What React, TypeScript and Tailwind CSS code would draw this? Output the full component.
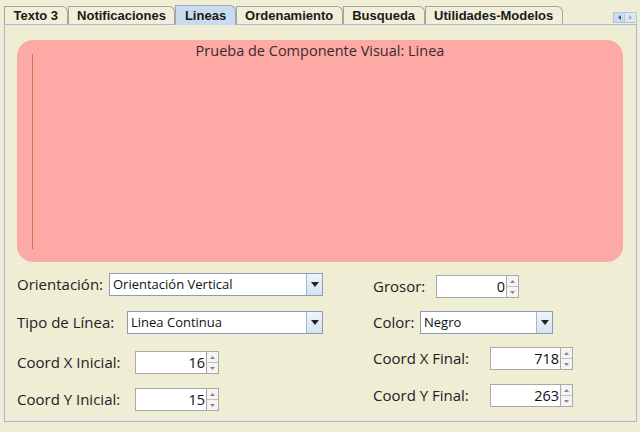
import React from "react";

const font = { fontFamily: '"Open Sans", "Noto Sans", sans-serif' };

const tabs = ["Texto 3", "Notificaciones", "Lineas", "Ordenamiento", "Busqueda", "Utilidades-Modelos"];

function Tab({ label, active }: { label: string; active?: boolean }) {
  return (
    <div
      className={
        active
          ? "relative -mb-px h-[20px] px-[8.5px] border border-b-0 border-[#9aa8c0] bg-[#c9dcef] rounded-tr-[6px] text-[13px] font-bold text-[#1a1a1a] leading-[19px]"
          : "relative mt-[1px] h-[18px] px-[8.5px] border border-b-0 border-[#a5a5a5] bg-[#f1efd8] rounded-tr-[6px] text-[13px] font-bold text-[#1a1a1a] leading-[18px]"
      }
      style={{ fontFamily: '"Liberation Sans", Arial, sans-serif' }}
    >
      {label}
    </div>
  );
}

function Select({ value, w }: { value: string; w: string }) {
  return (
    <div className={`flex h-[23px] border border-[#8c9cb8] bg-white ${w}`}>
      <div className="flex-1 pl-[3px] text-[13px] leading-[21px] text-[#111]">{value}</div>
      <div className="w-[16px] border-l border-[#a8b4c8] bg-gradient-to-b from-[#eef4fb] to-[#d6e2ef] flex items-center justify-center">
        <svg width="8" height="5" viewBox="0 0 8 5">
          <path d="M0 0h8L4 5z" fill="#222" />
        </svg>
      </div>
    </div>
  );
}

function Spinner({ value, w }: { value: string; w: string }) {
  return (
    <div className="flex h-[23px]">
      <div className={`border border-[#a8a8a8] bg-white text-right pr-[1px] text-[14.5px] leading-[21px] text-[#111] ${w}`}>{value}</div>
      <div className="w-[12px] flex flex-col border border-l-0 border-[#a8a8a8] bg-[#f4f4f4]">
        <div className="flex-1 flex items-center justify-center border-b border-[#c0c0c0]">
          <svg width="5" height="3" viewBox="0 0 5 3"><path d="M0 3h5L2.5 0z" fill="#888" /></svg>
        </div>
        <div className="flex-1 flex items-center justify-center">
          <svg width="5" height="3" viewBox="0 0 5 3"><path d="M0 0h5L2.5 3z" fill="#888" /></svg>
        </div>
      </div>
    </div>
  );
}

function Label({ children, w }: { children: React.ReactNode; w: string }) {
  return <div className={`text-[15px] text-[#222] ${w}`}>{children}</div>;
}

export default function App() {
  return (
    <div className="w-[640px] h-[432px] bg-[#efedd4] overflow-hidden" style={font}>
      <div className="flex items-end pl-[4px] pt-[5px] pr-[3px]">
        {tabs.map((t) => (
          <Tab key={t} label={t} active={t === "Lineas"} />
        ))}
        <div className="flex-1" />
        <div className="flex mb-px">
          <div className="w-[12px] h-[11px] bg-[#c9dcef] border border-[#b5c5dc] flex items-center justify-center">
            <svg width="3" height="5" viewBox="0 0 3 5"><path d="M3 0v5L0 2.5z" fill="#556" /></svg>
          </div>
          <div className="w-[12px] h-[11px] bg-[#dde8f4] border border-l-0 border-[#b5c5dc] flex items-center justify-center">
            <svg width="3" height="5" viewBox="0 0 3 5"><path d="M0 0v5L3 2.5z" fill="#aab" /></svg>
          </div>
        </div>
      </div>
      <div className="ml-[4px] w-[633px] h-[398px] border border-[#a9b8d8] pt-[15px] pl-[12px]">
        <div className="w-[606px] h-[222px] rounded-[16px] bg-[#fdaaa6] pt-[1px] flex flex-col">
          <div className="text-center text-[14.5px] text-[#3a2a2a] leading-[20px]">Prueba de Componente Visual: Linea</div>
          <div className="ml-[15px] mt-[-7px] w-[1px] h-[195px] bg-[#b9804f]" />
        </div>
        <div className="flex mt-[11px]">
          <div className="w-[356px] flex flex-col">
            <div className="flex items-center">
              <Label w="w-[92px]">Orientación:</Label>
              <Select value="Orientación Vertical" w="w-[214px]" />
            </div>
            <div className="flex items-center mt-[15px]">
              <Label w="w-[110px]">Tipo de Línea:</Label>
              <Select value="Linea Continua" w="w-[196px]" />
            </div>
            <div className="flex items-center mt-[17px]">
              <Label w="w-[118px]">Coord X Inicial:</Label>
              <Spinner value="16" w="w-[72px]" />
            </div>
            <div className="flex items-center mt-[14px]">
              <Label w="w-[118px]">Coord Y Inicial:</Label>
              <Spinner value="15" w="w-[72px]" />
            </div>
          </div>
          <div className="flex flex-col pt-[2px]">
            <div className="flex items-center">
              <Label w="w-[63px]">Grosor:</Label>
              <Spinner value="0" w="w-[71px]" />
            </div>
            <div className="flex items-center mt-[13px]">
              <Label w="w-[47px]">Color:</Label>
              <Select value="Negro" w="w-[133px]" />
            </div>
            <div className="flex items-center mt-[13px]">
              <Label w="w-[117px]">Coord X Final:</Label>
              <Spinner value="718" w="w-[71px]" />
            </div>
            <div className="flex items-center mt-[14px]">
              <Label w="w-[117px]">Coord Y Final:</Label>
              <Spinner value="263" w="w-[71px]" />
            </div>
          </div>
        </div>
      </div>
    </div>
  );
}
